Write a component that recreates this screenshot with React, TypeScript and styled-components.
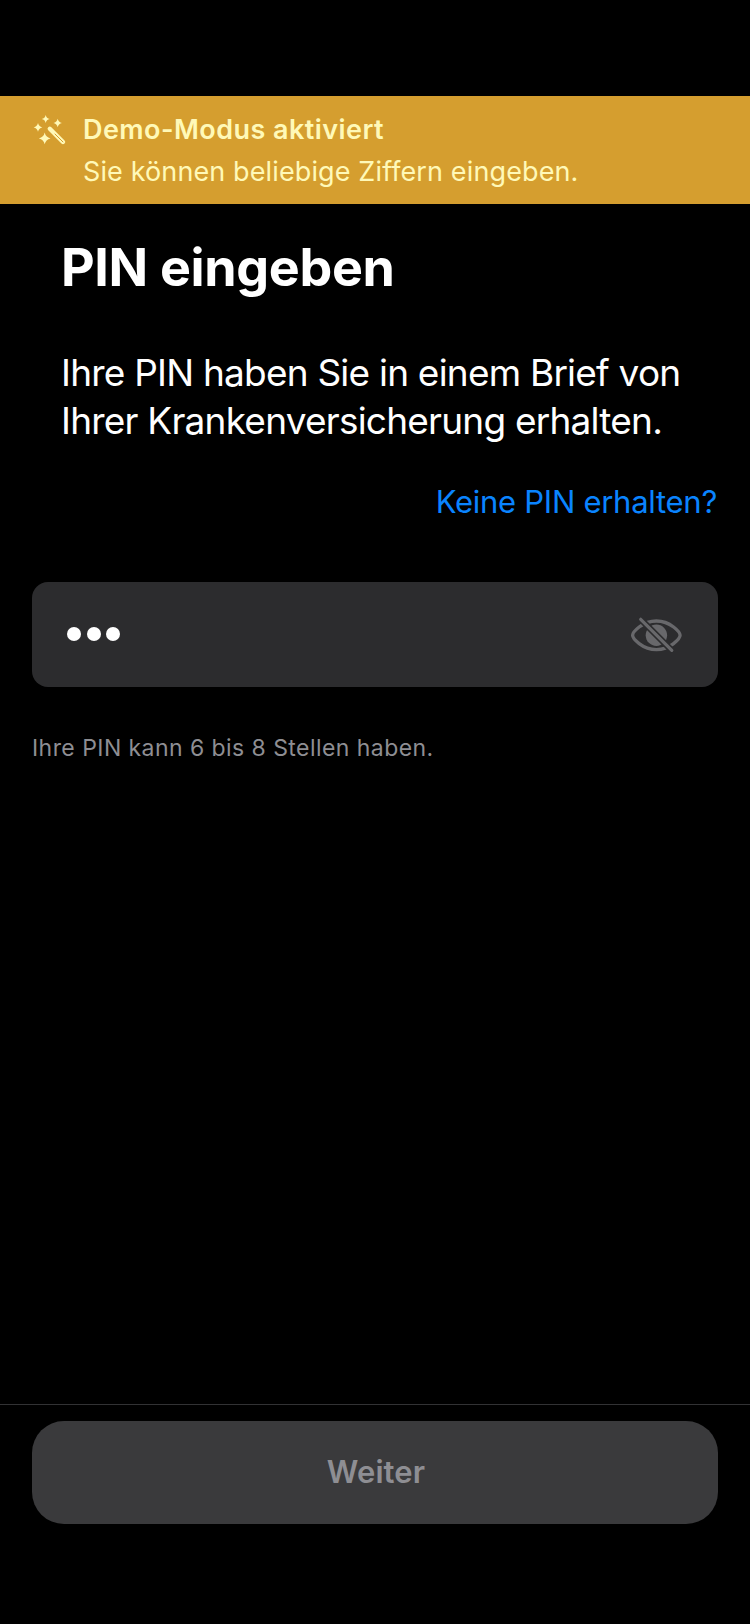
import React from "react";
import styled, { createGlobalStyle } from "styled-components";

const GlobalStyle = createGlobalStyle`
  * { box-sizing: border-box; }
  body { margin: 0; background: #000; font-family: Inter, "Liberation Sans", sans-serif; }
  h1, p { margin: 0; }
`;

const Screen = styled.main`
  width: 750px;
  height: 1624px;
  padding-top: 96px;
  display: flex;
  flex-direction: column;
  overflow: hidden;
  background: #000;
  color: #fff;
`;

const Banner = styled.section`
  display: flex;
  flex-shrink: 0;
  gap: 15px;
  height: 108px;
  padding: 13px 32px;
  background: #d59e2f;
  color: #fff9b8;
`;

const WandSvg = styled.svg`
  width: 36px;
  height: 36px;
  flex-shrink: 0;
  margin-top: 3px;
`;

const BannerText = styled.p<{ $bold?: boolean }>`
  font-size: 27px;
  line-height: 42px;
  white-space: nowrap;
  font-weight: ${(p) => (p.$bold ? 600 : 400)};
  letter-spacing: ${(p) => (p.$bold ? "0.44px" : "0.12px")};
`;

const Title = styled.h1`
  margin: 33px 0 0 61px;
  font-size: 52px;
  line-height: 62px;
  font-weight: 700;
  letter-spacing: -0.34px;
`;

const Intro = styled.p`
  margin: 50px 0 0 61px;
  font-size: 37px;
  line-height: 48px;
  letter-spacing: -0.78px;
  white-space: nowrap;
`;

const Help = styled.a`
  align-self: flex-end;
  margin: 37px 33px 0 0;
  font-size: 31px;
  line-height: 40px;
  letter-spacing: -0.27px;
  color: #0a84ff;
`;

const Field = styled.div`
  display: flex;
  flex-shrink: 0;
  align-items: center;
  justify-content: space-between;
  height: 105px;
  margin: 60px 32px 0;
  padding: 0 36px 0 35px;
  border-radius: 16px;
  background: #2c2c2e;
`;

const Dots = styled.div`
  display: flex;
  gap: 5.5px;
  padding-bottom: 2px;
`;

const Dot = styled.span`
  width: 14px;
  height: 14px;
  border-radius: 50%;
  background: #fff;
`;

const EyeSvg = styled.svg`
  width: 52px;
  height: 37px;
`;

const Hint = styled.p`
  margin: 45px 0 0 32px;
  font-size: 23px;
  line-height: 32px;
  letter-spacing: 0.44px;
  color: #8e8e93;
`;

const Footer = styled.footer`
  flex-shrink: 0;
  height: 220px;
  margin-top: auto;
  padding: 16px 32px;
  border-top: 1px solid #323234;
`;

const Next = styled.button`
  width: 100%;
  height: 103px;
  padding: 0 0 2px 2px;
  border: 0;
  border-radius: 32px;
  background: #3a3a3c;
  color: #8e8e93;
  font: 600 31px Inter, "Liberation Sans", sans-serif;
  letter-spacing: 0.1px;
`;

function Star({ x, y, r }: { x: number; y: number; r: number }) {
  const k = r * 0.17;
  return (
    <path
      fill="currentColor"
      d={`M${x} ${y - r}Q${x + k} ${y - k} ${x + r} ${y}Q${x + k} ${y + k} ${x} ${y + r}Q${x - k} ${y + k} ${x - r} ${y}Q${x - k} ${y - k} ${x} ${y - r}Z`}
    />
  );
}

function WandIcon() {
  return (
    <WandSvg viewBox="0 0 36 36" fill="none" aria-hidden>
      <Star x={13.7} y={7} r={4} />
      <Star x={6} y={15.4} r={4.3} />
      <Star x={25.7} y={11} r={4.3} />
      <Star x={12.7} y={26.4} r={5.8} />
      <path d="M17.8 16.8L31 30" stroke="currentColor" strokeWidth="4.4" strokeLinecap="round" />
      <path d="M23 22L30.9 29.9" stroke="#d59e2f" strokeWidth="1" strokeLinecap="round" />
    </WandSvg>
  );
}

function EyeOffIcon() {
  return (
    <EyeSvg viewBox="0 0 52 37" fill="none" color="#68686b" aria-hidden>
      <mask id="slash-gap" maskUnits="userSpaceOnUse" x="0" y="0" width="52" height="37">
        <path d="M0 0H52V37H0Z" fill="#fff" />
        <path d="M6.4 -1L46.1 38.7" stroke="#000" strokeWidth="6.4" />
      </mask>
      <g mask="url(#slash-gap)">
        <path
          d="M2.6 19.3C2.6 16.3 12.2 5 26.4 5S50.1 16.3 50.1 19.3S40.6 33.6 26.4 33.6S2.6 22.3 2.6 19.3Z"
          stroke="currentColor"
          strokeWidth="3.3"
        />
        <circle cx="26.4" cy="19.3" r="10.7" fill="currentColor" />
      </g>
      <path d="M10.7 3.3L41.8 34.4" stroke="currentColor" strokeWidth="3.2" strokeLinecap="round" />
    </EyeSvg>
  );
}

export default function App() {
  return (
    <Screen>
      <GlobalStyle />
      <Banner>
        <WandIcon />
        <div>
          <BannerText $bold>Demo-Modus aktiviert</BannerText>
          <BannerText>Sie können beliebige Ziffern eingeben.</BannerText>
        </div>
      </Banner>
      <Title>PIN eingeben</Title>
      <Intro>
        Ihre PIN haben Sie in einem Brief von
        <br />
        Ihrer Krankenversicherung erhalten.
      </Intro>
      <Help>Keine PIN erhalten?</Help>
      <Field>
        <Dots>
          <Dot />
          <Dot />
          <Dot />
        </Dots>
        <EyeOffIcon />
      </Field>
      <Hint>Ihre PIN kann 6 bis 8 Stellen haben.</Hint>
      <Footer>
        <Next>Weiter</Next>
      </Footer>
    </Screen>
  );
}
